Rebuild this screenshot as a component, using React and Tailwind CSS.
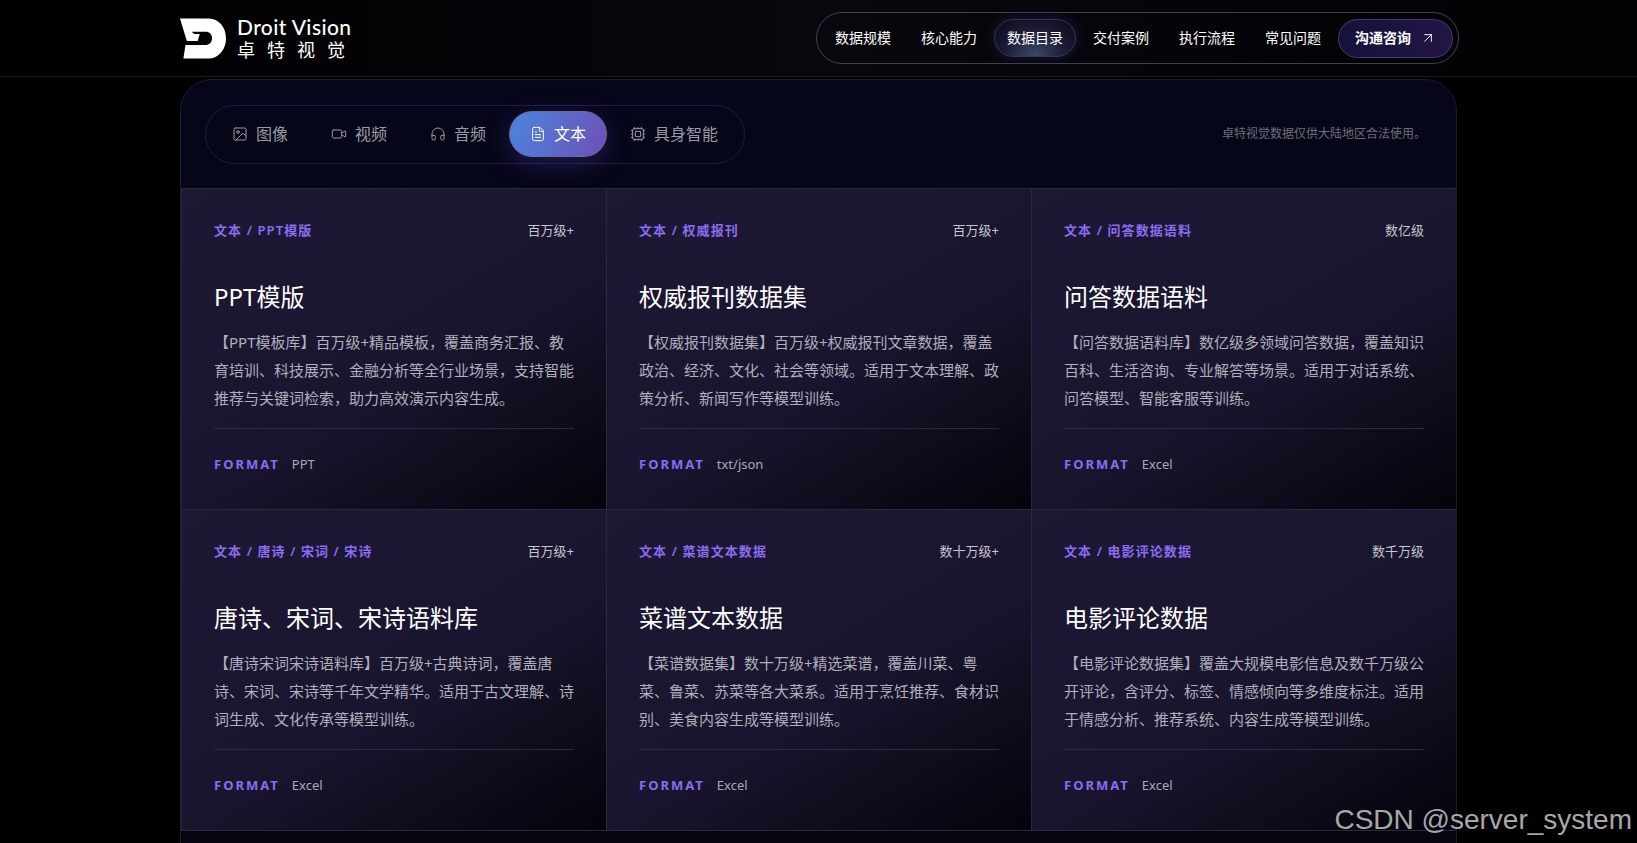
import { Image, Video, Headphones, FileText, Cpu, ArrowUpRight } from 'lucide-react';

const navItems = ['数据规模', '核心能力', '数据目录', '交付案例', '执行流程', '常见问题'];

const tabs = [
  { label: '图像', icon: Image },
  { label: '视频', icon: Video },
  { label: '音频', icon: Headphones },
  { label: '文本', icon: FileText, active: true },
  { label: '具身智能', icon: Cpu }
];

const cards = [
  {
    tag: '文本 / PPT模版',
    size: '百万级+',
    title: 'PPT模版',
    desc: '【PPT模板库】百万级+精品模板，覆盖商务汇报、教育培训、科技展示、金融分析等全行业场景，支持智能推荐与关键词检索，助力高效演示内容生成。',
    format: 'PPT'
  },
  {
    tag: '文本 / 权威报刊',
    size: '百万级+',
    title: '权威报刊数据集',
    desc: '【权威报刊数据集】百万级+权威报刊文章数据，覆盖政治、经济、文化、社会等领域。适用于文本理解、政策分析、新闻写作等模型训练。',
    format: 'txt/json'
  },
  {
    tag: '文本 / 问答数据语料',
    size: '数亿级',
    title: '问答数据语料',
    desc: '【问答数据语料库】数亿级多领域问答数据，覆盖知识百科、生活咨询、专业解答等场景。适用于对话系统、问答模型、智能客服等训练。',
    format: 'Excel'
  },
  {
    tag: '文本 / 唐诗 / 宋词 / 宋诗',
    size: '百万级+',
    title: '唐诗、宋词、宋诗语料库',
    desc: '【唐诗宋词宋诗语料库】百万级+古典诗词，覆盖唐诗、宋词、宋诗等千年文学精华。适用于古文理解、诗词生成、文化传承等模型训练。',
    format: 'Excel'
  },
  {
    tag: '文本 / 菜谱文本数据',
    size: '数十万级+',
    title: '菜谱文本数据',
    desc: '【菜谱数据集】数十万级+精选菜谱，覆盖川菜、粤菜、鲁菜、苏菜等各大菜系。适用于烹饪推荐、食材识别、美食内容生成等模型训练。',
    format: 'Excel'
  },
  {
    tag: '文本 / 电影评论数据',
    size: '数千万级',
    title: '电影评论数据',
    desc: '【电影评论数据集】覆盖大规模电影信息及数千万级公开评论，含评分、标签、情感倾向等多维度标注。适用于情感分析、推荐系统、内容生成等模型训练。',
    format: 'Excel'
  }
];

function Logo() {
  return (
    <svg width="46" height="41" viewBox="0 0 135 118" fill="#fff">
      <path
        fillRule="evenodd"
        d="M0 0H84C114 0 135 26 135 58C135 92 112 118 82 118H10L16 78H74C86 78 94 70 94 58C94 47 87 39 75 39H34L42 46L58 46L52 66H20Z"
      />
    </svg>
  );
}

function Card({ card }) {
  return (
    <div className="flex h-[321px] flex-col border-t border-l border-[#2a2740] bg-[linear-gradient(150deg,#1d1833_0%,#1a152f_55%,#04030a_100%)] px-8 pt-8">
      <div className="flex h-5 items-center justify-between">
        <span className="text-[13px] font-semibold tracking-[1.1px] text-[#8b6cf0]">{card.tag}</span>
        <span className="text-[13px] text-[#c6c6cf]">{card.size}</span>
      </div>
      <h3 className="mt-[39px] h-[34px] text-2xl leading-[34px] font-normal text-white">{card.title}</h3>
      <p className="mt-[14px] h-[84px] text-[15px] leading-7 text-[#b0afbb]">{card.desc}</p>
      <div className="mt-4 border-t border-[#2c2a40] pt-[26px]">
        <div className="flex h-5 items-center gap-3">
          <span className="text-[13px] font-bold tracking-[2px] text-[#8b6cf0]">FORMAT</span>
          <span className="text-[13px] text-[#a9a9b3]">{card.format}</span>
        </div>
      </div>
    </div>
  );
}

export default function App() {
  return (
    <div className="relative h-[843px] overflow-hidden bg-black font-['Noto_Sans','Noto_Sans_CJK_SC',sans-serif]">
      <header className="flex h-[77px] items-center justify-between border-b border-[#1a1a24] bg-[linear-gradient(90deg,#000_0%,#07070d_50%,#020204_100%)] px-[178px]">
        <div className="flex items-center gap-[11px] pl-[2px]">
          <Logo />
          <div className="text-white">
            <div className="text-[21px] leading-[20px] font-medium tracking-[0.4px] font-['Lato',sans-serif]">Droit Vision</div>
            <div className="mt-[3px] text-lg leading-[20px] tracking-[12px]">卓特视觉</div>
          </div>
        </div>
        <nav className="flex h-[52px] w-[643px] items-center gap-1 rounded-full border border-[#3e4150] px-[5px]">
          {navItems.map((item) =>
            item === '数据目录' ? (
              <a
                key={item}
                className="flex h-[38px] w-[82px] items-center justify-center rounded-full border border-[#3a3262] bg-[radial-gradient(ellipse_at_50%_100%,#3a4a68_0%,#1c1a34_55%,#0a0914_100%)] text-sm text-white shadow-[0_0_14px_rgba(70,60,130,0.35)]"
              >
                {item}
              </a>
            ) : (
              <a key={item} className="flex h-[38px] w-[82px] items-center justify-center text-sm text-white">
                {item}
              </a>
            )
          )}
          <button
            type="button"
            className="flex h-[39px] w-[115px] items-center justify-center gap-[9px] rounded-full border border-[#45397f] bg-[linear-gradient(90deg,#14123a,#241545)] text-sm font-semibold text-white"
          >
            沟通咨询
            <ArrowUpRight size={16} strokeWidth={1.4} />
          </button>
        </nav>
      </header>

      <main className="mx-[180px] mt-[2px] overflow-hidden rounded-t-[32px] border border-[#1d1c2c] bg-[linear-gradient(180deg,#06061a_0%,#05050f_100%)]">
        <div className="flex h-[108px] items-center justify-between pr-[30px] pl-6">
          <div className="flex h-[59px] items-center gap-[3px] rounded-full border border-[#1f1c3c] px-[6px]">
            {tabs.map(({ label, icon: Icon, active }) =>
              active ? (
                <button
                  key={label}
                  type="button"
                  className="flex h-[46px] items-center gap-2 rounded-full border border-[#6d6a9c] bg-[linear-gradient(110deg,#4a85dd,#6f4fb8)] px-5 text-base text-white shadow-[0_6px_24px_rgba(70,60,170,0.4)]"
                >
                  <Icon size={16} strokeWidth={1.5} />
                  {label}
                </button>
              ) : (
                <button key={label} type="button" className="flex h-[46px] items-center gap-2 px-5 text-base text-[#9a9aa3]">
                  <Icon size={16} strokeWidth={1.5} />
                  {label}
                </button>
              )
            )}
          </div>
          <p className="text-xs text-[#6e6e78]">卓特视觉数据仅供大陆地区合法使用。</p>
        </div>
        <div className="grid grid-cols-3 border-b border-[#2a2740]">
          {cards.map((card) => (
            <Card key={card.title} card={card} />
          ))}
        </div>
        <div className="h-10" />
      </main>

      <span className="absolute right-[5px] bottom-[7px] text-[28px] leading-8 font-['Liberation_Sans',sans-serif] text-[#a8a8a8]">
        CSDN @server_system
      </span>
    </div>
  );
}
